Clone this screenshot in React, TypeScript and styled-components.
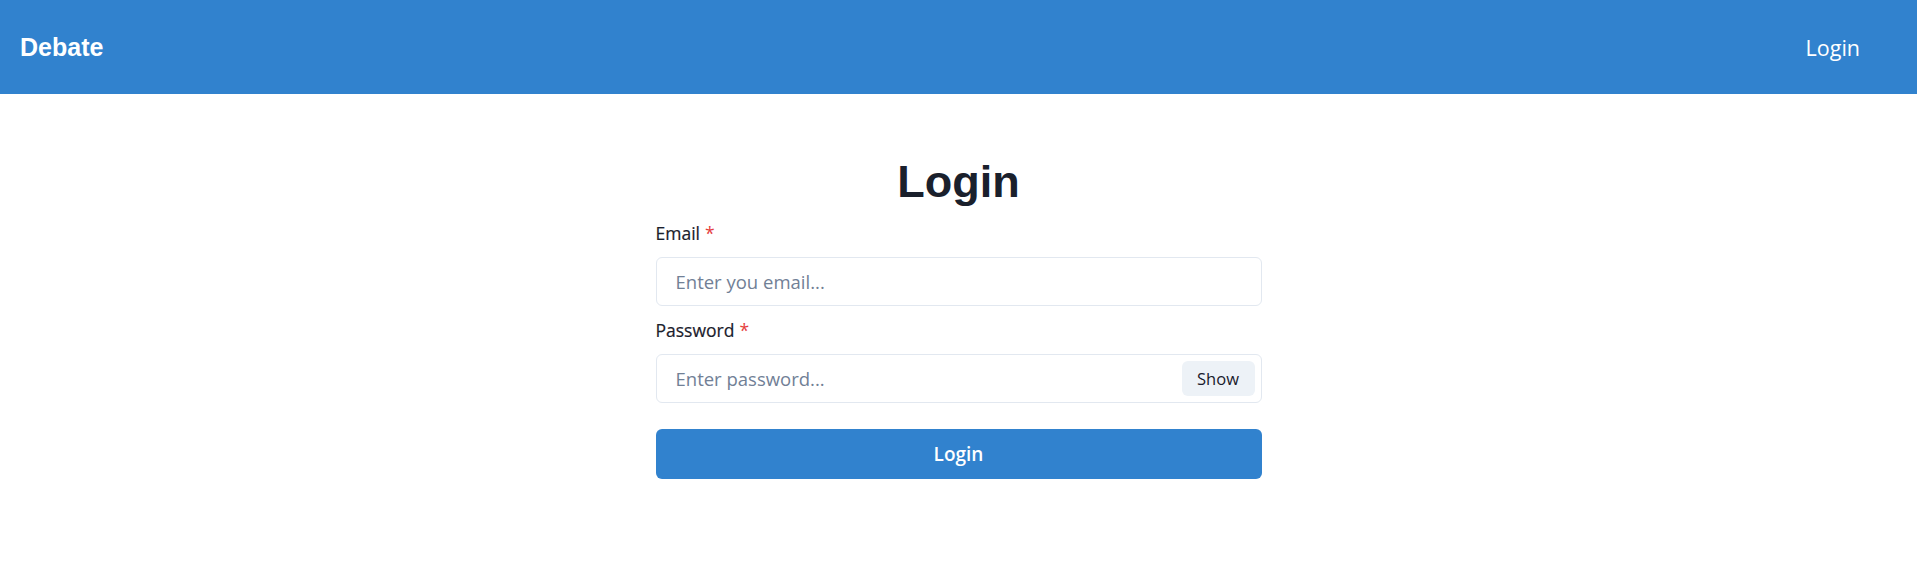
import React, { useState } from "react";
import styled, { createGlobalStyle } from "styled-components";

const GlobalStyle = createGlobalStyle`
  html, body { margin: 0; padding: 0; background: #ffffff; }
  body { font-family: "Open Sans", "Noto Sans", sans-serif; color: #1A202C; }
  * { box-sizing: border-box; }
`;

const NavBar = styled.header`
  height: 94px;
  background: #3182ce;
  display: flex;
  align-items: center;
  justify-content: space-between;
  padding: 0 57px 0 20px;
`;

const Brand = styled.div`
  font-family: "Liberation Sans", Arial, sans-serif;
  font-weight: 700;
  font-size: 25px;
  color: #ffffff;
`;

const NavLink = styled.a`
  font-size: 21.5px;
  color: #ffffff;
  text-decoration: none;
  cursor: pointer;
`;

const Main = styled.main`
  display: flex;
  justify-content: center;
  padding-top: 60px;
`;

const Form = styled.form`
  width: 606px;
  display: flex;
  flex-direction: column;
`;

const Title = styled.h1`
  margin: 0 0 11px;
  text-align: center;
  font-family: "Liberation Sans", Arial, sans-serif;
  font-weight: 700;
  font-size: 45px;
  line-height: 56px;
  color: #1a202c;
`;

const Field = styled.div`
  display: flex;
  flex-direction: column;
  margin-bottom: 12px;
`;

const Label = styled.label`
  font-size: 17.5px;
  font-weight: 500;
  line-height: 24px;
  margin-bottom: 12px;
  color: #1a202c;
  -webkit-text-stroke: 0.2px #1a202c;
`;

const Required = styled.span`
  color: #e53e3e;
  margin-left: 5px;
  -webkit-text-stroke: 0;
`;

const InputGroup = styled.div`
  position: relative;
  display: flex;
`;

const Input = styled.input<{ $pr?: number }>`
  width: 100%;
  height: 49px;
  border: 1px solid #e2e8f0;
  border-radius: 6px;
  padding: 0 ${(p) => p.$pr ?? 16}px 0 19px;
  font-family: inherit;
  font-size: 18.5px;
  color: #1a202c;
  outline: none;
  &::placeholder { color: #718096; }
`;

const ShowButton = styled.button`
  position: absolute;
  right: 7px;
  top: 7px;
  height: 35px;
  width: 73px;
  border: none;
  border-radius: 6px;
  background: #edf2f7;
  font-family: inherit;
  font-size: 16.5px;
  font-weight: 500;
  color: #1a202c;
  cursor: pointer;
`;

const SubmitButton = styled.button`
  margin-top: 14px;
  height: 50px;
  border: none;
  border-radius: 6px;
  background: #3182ce;
  color: #ffffff;
  font-family: inherit;
  font-size: 19px;
  font-weight: 600;
  cursor: pointer;
`;

export default function App() {
  const [show, setShow] = useState(false);
  return (
    <>
      <GlobalStyle />
      <NavBar>
        <Brand>Debate</Brand>
        <NavLink>Login</NavLink>
      </NavBar>
      <Main>
        <Form onSubmit={(e) => e.preventDefault()}>
          <Title>Login</Title>
          <Field>
            <Label>
              Email<Required>*</Required>
            </Label>
            <Input type="email" placeholder="Enter you email..." />
          </Field>
          <Field>
            <Label>
              Password<Required>*</Required>
            </Label>
            <InputGroup>
              <Input
                $pr={90}
                type={show ? "text" : "password"}
                placeholder="Enter password..."
              />
              <ShowButton type="button" onClick={() => setShow(!show)}>
                {show ? "Hide" : "Show"}
              </ShowButton>
            </InputGroup>
          </Field>
          <SubmitButton type="submit">Login</SubmitButton>
        </Form>
      </Main>
    </>
  );
}
